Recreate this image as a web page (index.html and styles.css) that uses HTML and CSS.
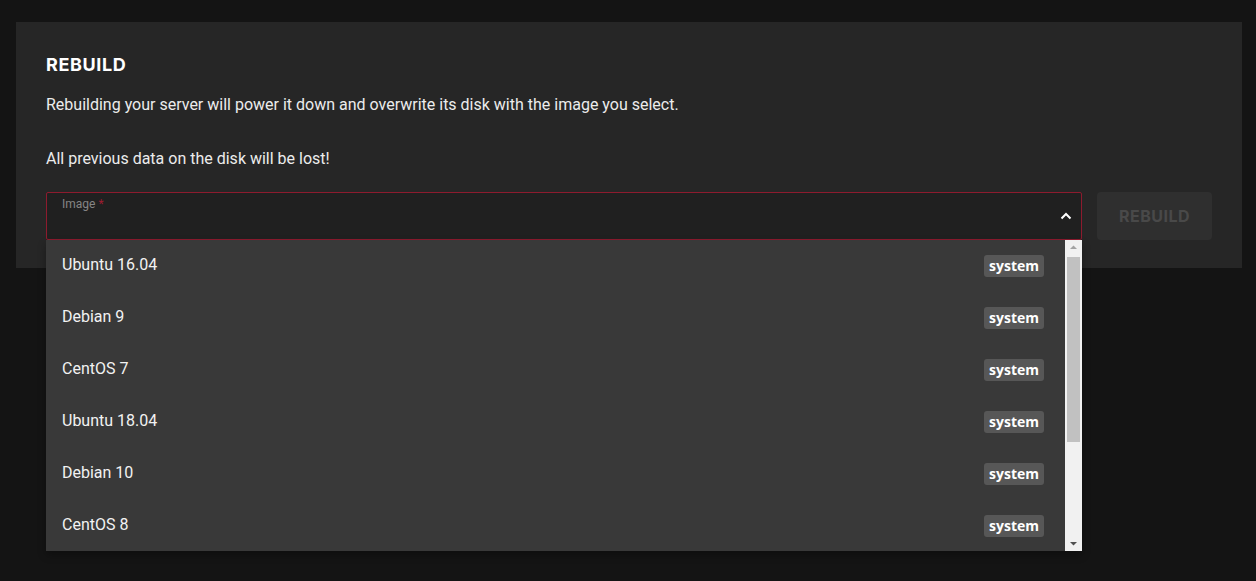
FILE: index.html
```html
<!DOCTYPE html>
<html>
<head>
<meta charset="utf-8">
<link rel="stylesheet" href="styles.css">
</head>
<body>
<section class="card">
  <h2 class="title">REBUILD</h2>
  <p class="text">Rebuilding your server will power it down and overwrite its disk with the image you select.</p>
  <p class="text">All previous data on the disk will be lost!</p>
  <div class="form-row">
    <div class="select">
      <div class="field">
        <span class="label">Image <span class="req">*</span></span>
        <svg class="chevron" width="12" height="8" viewBox="0 0 12 8"><path d="M1.5 6.5 L6 2 L10.5 6.5" fill="none" stroke="#fff" stroke-width="2"/></svg>
      </div>
      <div class="menu">
        <ul class="options">
          <li class="option"><span>Ubuntu 16.04</span><span class="badge">system</span></li>
          <li class="option"><span>Debian 9</span><span class="badge">system</span></li>
          <li class="option"><span>CentOS 7</span><span class="badge">system</span></li>
          <li class="option"><span>Ubuntu 18.04</span><span class="badge">system</span></li>
          <li class="option"><span>Debian 10</span><span class="badge">system</span></li>
          <li class="option"><span>CentOS 8</span><span class="badge">system</span></li>
        </ul>
        <div class="scrollbar">
          <svg class="arrow" width="17" height="15" viewBox="0 0 17 15"><path d="M5 9 L8.5 5.5 L12 9 Z" fill="#a3a3a3"/></svg>
          <div class="track"><div class="thumb"></div></div>
          <svg class="arrow" width="17" height="15" viewBox="0 0 17 15"><path d="M5 6 L8.5 9.5 L12 6 Z" fill="#505050"/></svg>
        </div>
      </div>
    </div>
    <button class="btn">REBUILD</button>
  </div>
</section>
</body>
</html>
```
FILE: styles.css
```css
html, body {
  margin: 0;
  padding: 0;
  background: #141414;
  height: 100%;
}
body {
  padding: 22px 14px 0 16px;
  box-sizing: border-box;
  font-family: Roboto, "Liberation Sans", sans-serif;
}
.card {
  background: #262626;
  padding: 32px 30px 28px 30px;
  height: 246px;
  box-sizing: border-box;
}
.title {
  margin: 0;
  font-family: Inter, "Liberation Sans", sans-serif;
  font-weight: 700;
  font-size: 18px;
  line-height: 22px;
  color: #ffffff;
  letter-spacing: 0.6px;
}
.text {
  margin: 19px 0 0 0;
  font-size: 16px;
  line-height: 20px;
  color: #ececec;
}
.text + .text {
  margin-top: 34px;
}
.form-row {
  display: flex;
  gap: 15px;
  margin-top: 23px;
}
.select {
  position: relative;
  width: 1036px;
}
.field {
  height: 48px;
  box-sizing: border-box;
  border: 1px solid #8d1b2e;
  border-radius: 2px;
  background: #202020;
  position: relative;
  display: flex;
  align-items: center;
  justify-content: flex-end;
  padding-right: 8px;
}
.label {
  position: absolute;
  left: 15px;
  top: 4px;
  font-size: 12px;
  color: #858585;
}
.req {
  color: #9c1c30;
}
.chevron {
  display: block;
  margin-right: 1px;
}
.menu {
  position: absolute;
  left: 0;
  top: 48px;
  width: 1036px;
  height: 311px;
  background: #393939;
  display: flex;
  box-shadow: 0 4px 8px rgba(0,0,0,0.3);
}
.options {
  list-style: none;
  margin: 0;
  padding: 0;
  flex: 1;
  overflow: hidden;
}
.option {
  height: 52px;
  display: flex;
  align-items: center;
  justify-content: space-between;
  padding: 0 21px 0 16px;
  font-size: 16px;
  color: #f2f2f2;
}
.option span:first-child {
  margin-top: -3px;
}
.badge {
  background: #575757;
  color: #ffffff;
  font-family: "Open Sans", "Liberation Sans", sans-serif;
  font-weight: 700;
  font-size: 14px;
  height: 22px;
  line-height: 22px;
  width: 60px;
  text-align: center;
  border-radius: 3px;
  margin-top: 0;
}
.scrollbar {
  width: 17px;
  background: #f1f1f1;
  display: flex;
  flex-direction: column;
}
.arrow {
  display: block;
  flex: none;
}
.track {
  flex: 1;
  padding: 2px 2px 0 2px;
}
.thumb {
  height: 185px;
  background: #c1c1c1;
}
.btn {
  width: 115px;
  height: 48px;
  border: none;
  border-radius: 4px;
  background: #2f2f2f;
  color: #494949;
  font-family: Inter, "Liberation Sans", sans-serif;
  font-weight: 700;
  font-size: 16px;
  letter-spacing: 0.5px;
  padding: 0;
}
```
